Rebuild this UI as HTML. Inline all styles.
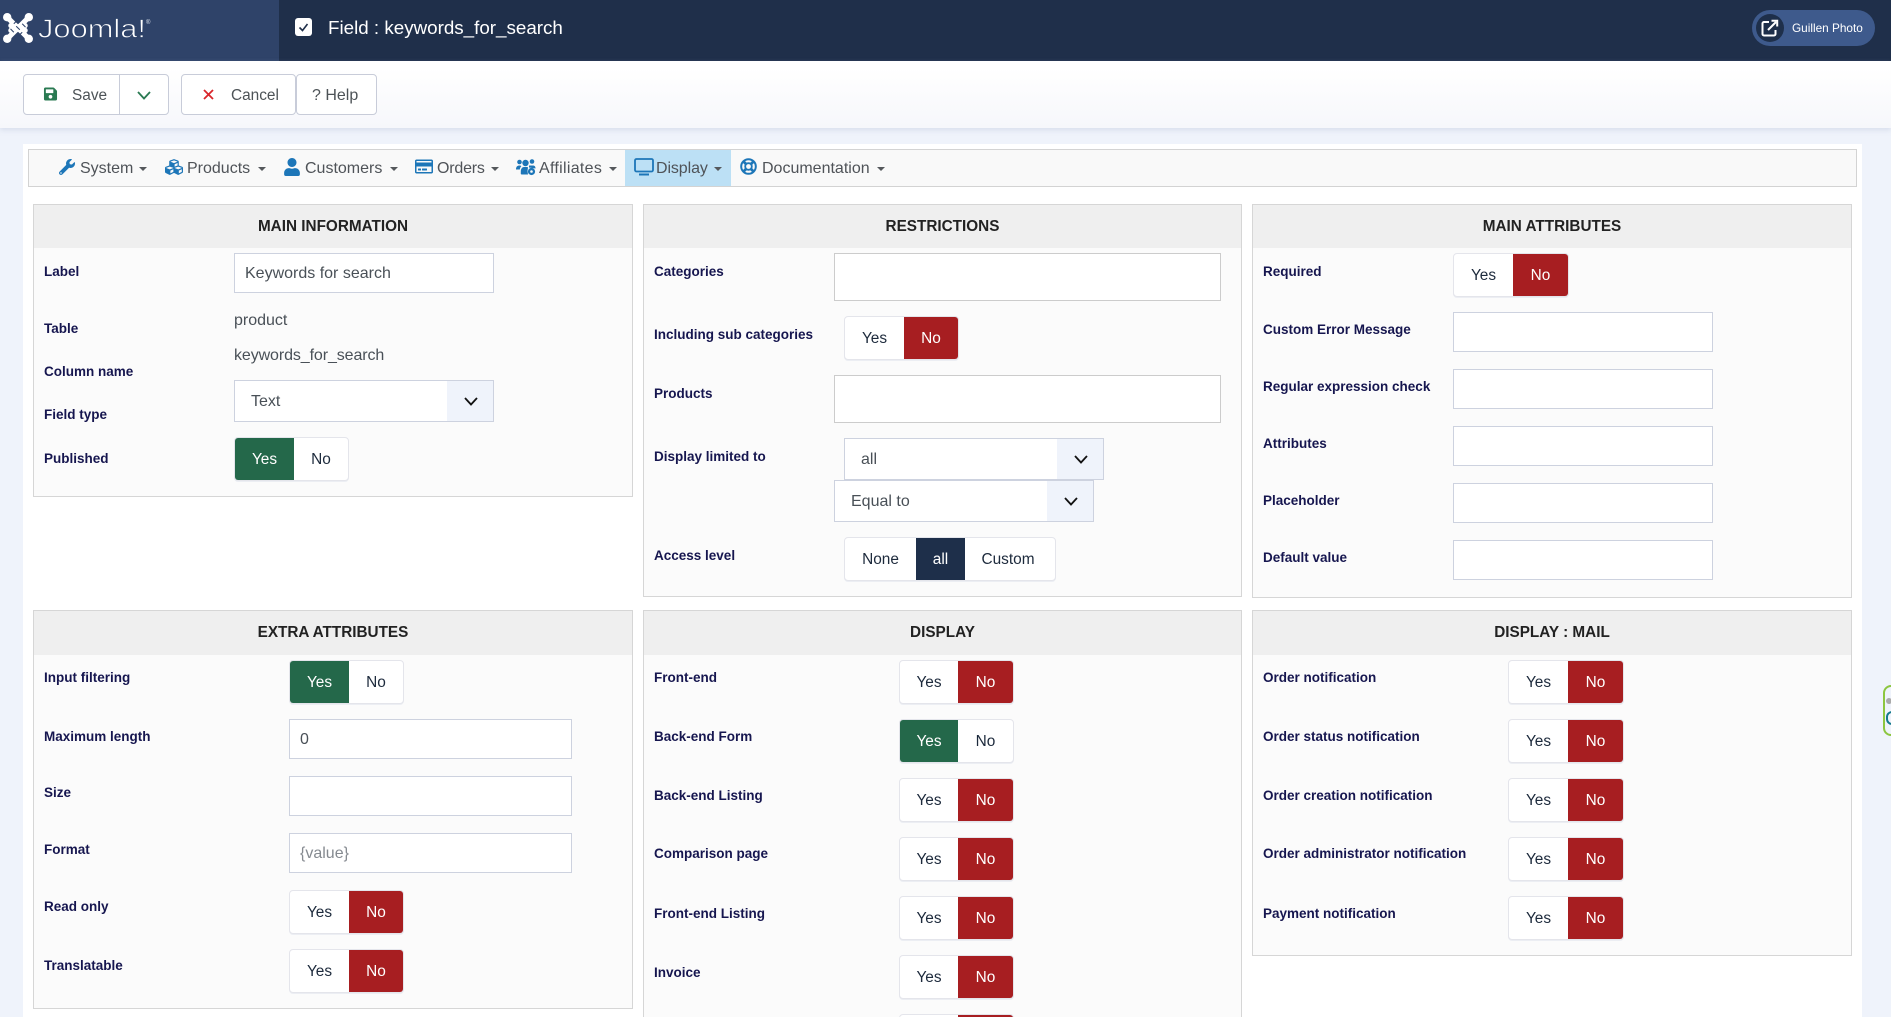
<!DOCTYPE html>
<html lang="en">
<head>
<meta charset="utf-8">
<title>Field : keywords_for_search</title>
<style>
*{box-sizing:border-box}
html,body{margin:0;padding:0;background:#eff3fb;font-family:"Liberation Sans",Arial,sans-serif}
#w{position:relative;width:1891px;height:1017px;overflow:hidden;background:#eff3fb}
.a,.l,.p,.i,.t,.s,.b,.n,.c,svg{position:absolute}
.l{left:0;margin-top:1px;font-size:13.5px;font-weight:700;line-height:20px;color:#16164f;white-space:nowrap}
.p{border:1px solid #d6d6d6;background:#fbfbfb}
.p h3{margin:0;height:43px;background:#efefef;font-size:15.3px;font-weight:700;color:#222;text-align:center;line-height:43px}
.i{background:#fff;border:1px solid #cdd2df;font-size:16px;line-height:40px;padding-left:10px;color:#495057;white-space:nowrap}
.s{background:#fff;border:1px solid #cdd2df;font-size:16px;color:#495057;height:42px;line-height:42px;white-space:nowrap}
.s i{position:absolute;right:0;top:0;bottom:0;width:46px;background:#eff3fb}
.s svg{right:15px;top:16px}
.t{height:44px;display:flex;border:1px solid #e4e5eb;border-radius:4px;background:#fff;font-size:15.4px;color:#1d2a3c;box-shadow:0 1px 0 #eceef3;overflow:hidden}
.t span{display:flex;align-items:center;justify-content:center;height:100%;padding-top:1px}
.g{background:#24684a;color:#fff}
.r{background:#a71e21;color:#fff}
.k{background:#1e2f4a;color:#fff}
.b{top:74px;height:41px;border:1px solid #c8ccd9;border-radius:4px;background:#fff}
.x{position:absolute;top:74px;font-size:15.4px;line-height:43px;color:#4d5357;white-space:nowrap}
.n{top:159px;font-size:16px;line-height:20px;color:#4f5358;white-space:nowrap}
.c{top:167px;width:0;height:0;border-left:4px solid transparent;border-right:4px solid transparent;border-top:4.500px solid #55585c}
</style>
</head>
<body>
<div id="w">
<!-- header -->
<div class="a" style="left:0;top:0;width:1891px;height:61px;background:#1f2f4a"></div>
<div class="a" style="left:0;top:0;width:279px;height:61px;background:#2f4369"></div>
<svg style="left:3px;top:13px" width="30" height="30" viewBox="0 0 100 100" fill="none" stroke-linecap="round" stroke-linejoin="round">
<g stroke="#fff" stroke-width="17"><path d="M16 16L58 58L74 42"/><path d="M84 16L42 58L26 42"/><path d="M16 84L58 42L74 58"/><path d="M84 84L42 42L26 58"/></g>
<g stroke="#2f4369" stroke-width="3.500" stroke-linecap="butt"><path d="M36 36L47 25"/><path d="M64 36L75 47"/><path d="M64 64L53 75"/><path d="M36 64L25 53"/><path d="M44 44L56 56"/></g>
<g fill="#fff" stroke="none"><circle cx="14" cy="14" r="14"/><circle cx="86" cy="14" r="14"/><circle cx="14" cy="86" r="14"/><circle cx="86" cy="86" r="14"/></g>
</svg>
<svg style="left:36px;top:10px" width="120" height="36" viewBox="0 0 120 36">
<text x="2" y="27.500" font-family="Liberation Sans" font-size="25.7" fill="#fff" stroke="#2f4369" stroke-width=".75" textLength="108" lengthAdjust="spacingAndGlyphs">Joomla!</text>
<text x="110" y="14" font-family="Liberation Sans" font-size="6" fill="#dfe5ee">®</text>
</svg>
<svg style="left:295px;top:18px" width="18" height="18" viewBox="0 0 18 18"><rect x="0" y="0" width="17" height="18" rx="3" fill="#fff"/><path d="M4.500 9.500L7.500 12.500L12.500 6" fill="none" stroke="#1f2f4a" stroke-width="1.600"/></svg>
<div class="a" style="left:328px;top:16px;font-size:18.8px;line-height:24px;color:#fff;white-space:nowrap">Field : keywords_for_search</div>
<div class="a" style="left:1752px;top:10px;width:123px;height:36px;border-radius:18px;background:#3e5a8c"></div>
<div class="a" style="left:1756px;top:14px;width:28px;height:28px;border-radius:14px;background:#1e2f4a"></div>
<svg style="left:1761px;top:19px" width="18" height="18" viewBox="0 0 18 18" fill="none" stroke="#fff" stroke-width="2"><path d="M8 3H3a1.500 1.500 0 0 0-1.500 1.500V15A1.500 1.500 0 0 0 3 16.500H13A1.500 1.500 0 0 0 14.500 15V11"/><path d="M7 11L15 3"/><path d="M10.500 1.800H16.200V7.500" stroke-width="2"/></svg>
<div class="a" style="left:1792px;top:18px;font-size:11.8px;line-height:20px;color:#fff;white-space:nowrap">Guillen Photo</div>

<!-- toolbar -->
<div class="a" style="left:0;top:61px;width:1891px;height:67px;background:linear-gradient(#fff 10%,#f6f7fb);box-shadow:0 2px 5px rgba(170,180,210,.35)"></div>
<div class="b" style="left:23px;width:146px"></div>
<div class="a" style="left:119px;top:74px;width:1px;height:41px;background:#c8ccd9"></div>
<svg style="left:43px;top:87px" width="15" height="14" viewBox="0 16 448 480"><path fill="#2a7a52" d="M433.941 129.941l-83.882-83.882A48 48 0 0 0 316.118 32H48C21.490 32 0 53.490 0 80v352c0 26.510 21.490 48 48 48h352c26.510 0 48-21.490 48-48V163.882a48 48 0 0 0-14.059-33.941zM224 416c-35.346 0-64-28.654-64-64 0-35.346 28.654-64 64-64s64 28.654 64 64c0 35.346-28.654 64-64 64zm96-304.520V212c0 6.627-5.373 12-12 12H76c-6.627 0-12-5.373-12-12V108c0-6.627 5.373-12 12-12h228.520c3.183 0 6.235 1.264 8.485 3.515l3.480 3.480A11.996 11.996 0 0 1 320 111.480z"/></svg>
<div class="x" style="left:72px">Save</div>
<svg style="left:137px;top:91px" width="14" height="9" viewBox="0 0 14 9"><path d="M1 1L7 7.500L13 1" fill="none" stroke="#2a7a52" stroke-width="1.800"/></svg>
<div class="b" style="left:181px;width:115px"></div>
<svg style="left:203px;top:89px" width="11" height="11" viewBox="0 0 11 11"><path d="M1 1L10 10M10 1L1 10" stroke="#d9262b" stroke-width="1.800"/></svg>
<div class="x" style="left:231px">Cancel</div>
<div class="b" style="left:296px;width:81px"></div>
<div class="x" style="left:312px;font-size:16px">? Help</div>

<!-- white container -->
<div class="a" style="left:23px;top:144px;width:1839px;height:873px;background:#fff"></div>

<!-- nav -->
<div class="a" style="left:28px;top:149px;width:1829px;height:38px;background:#f9f9f9;border:1px solid #d3d3d3"></div>
<div class="a" style="left:625px;top:150px;width:106px;height:36px;background:#bce0f5"></div>
<svg style="left:59px;top:159px" width="16" height="16" viewBox="0 0 512 512"><path fill="#1d76b8" d="M507.730 109.100c-2.240-9.030-13.540-12.090-20.120-5.510l-74.360 74.360-67.880-11.310-11.310-67.880 74.360-74.360c6.620-6.620 3.430-17.900-5.660-20.160-47.380-11.740-99.550.91-136.580 37.930-39.640 39.640-50.550 97.100-34.050 147.200L18.740 402.760c-24.990 24.990-24.990 65.510 0 90.500 24.990 24.990 65.510 24.990 90.500 0l213.210-213.210c50.120 16.710 107.470 5.680 147.370-34.220 37.070-37.070 49.700-89.320 37.910-136.730zM64 472c-13.250 0-24-10.750-24-24 0-13.260 10.750-24 24-24s24 10.740 24 24c0 13.250-10.750 24-24 24z"/></svg>
<div class="n" style="left:80px">System</div><div class="c" style="left:139px"></div>
<svg style="left:165px;top:158px" width="18" height="18" viewBox="0 0 512 512"><path fill="#1d76b8" d="M488.600 250.200L392 214V105.500c0-15-9.300-28.400-23.400-33.700l-100-37.500c-8.100-3.100-17.100-3.100-25.300 0l-100 37.500c-14.100 5.300-23.400 18.700-23.400 33.700V214l-96.600 36.200C9.300 255.500 0 268.900 0 283.900V394c0 13.600 7.700 26.100 19.900 32.200l100 50c10.100 5.100 22.100 5.100 32.200 0l103.900-52 103.900 52c10.100 5.100 22.100 5.100 32.200 0l100-50c12.200-6.100 19.900-18.600 19.900-32.200V283.900c0-15-9.300-28.400-23.400-33.700zM358 214.800l-85 31.900v-68.200l85-37v73.300zM154 104.100l102-38.200 102 38.200v.6l-102 41.400-102-41.400v-.6zm84 291.100l-85 42.500v-79.100l85-38.800v75.400zm0-112l-102 41.400-102-41.400v-.6l102-38.200 102 38.200v.6zm240 112l-85 42.500v-79.100l85-38.800v75.400zm0-112l-102 41.400-102-41.400v-.6l102-38.200 102 38.200v.6z"/></svg>
<div class="n" style="left:187px">Products</div><div class="c" style="left:258px"></div>
<svg style="left:284px;top:158px" width="16" height="18" viewBox="0 0 448 512"><path fill="#1d76b8" d="M224 256c70.700 0 128-57.300 128-128S294.700 0 224 0 96 57.300 96 128s57.300 128 128 128zm89.600 32h-16.700c-22.200 10.200-46.900 16-72.900 16s-50.600-5.800-72.900-16h-16.700C60.200 288 0 348.200 0 422.400V464c0 26.500 21.500 48 48 48h352c26.500 0 48-21.500 48-48v-41.600c0-74.200-60.200-134.400-134.400-134.400z"/></svg>
<div class="n" style="left:305px">Customers</div><div class="c" style="left:390px"></div>
<svg style="left:415px;top:158px" width="18" height="17" viewBox="0 20 576 472"><path fill="#1d76b8" d="M527.900 32H48.100C21.500 32 0 53.500 0 80v352c0 26.500 21.500 48 48.100 48h479.800c26.600 0 48.100-21.500 48.100-48V80c0-26.500-21.500-48-48.100-48zM54.100 80h467.800c3.300 0 6 2.700 6 6v42H48.100V86c0-3.300 2.700-6 6-6zm467.800 352H54.100c-3.300 0-6-2.700-6-6V256h479.800v170c0 3.300-2.700 6-6 6zM192 332v40c0 6.600-5.400 12-12 12h-72c-6.600 0-12-5.400-12-12v-40c0-6.600 5.400-12 12-12h72c6.600 0 12 5.400 12 12zm192 0v40c0 6.600-5.400 12-12 12H236c-6.600 0-12-5.400-12-12v-40c0-6.600 5.400-12 12-12h136c6.600 0 12 5.400 12 12z"/></svg>
<div class="n" style="left:437px;letter-spacing:-.2px">Orders</div><div class="c" style="left:491px"></div>
<svg style="left:516px;top:158px" width="20" height="18" viewBox="0 0 20 18" fill="#1d76b8"><circle cx="3.500" cy="4" r="2.300"/><circle cx="16" cy="3.500" r="2.300"/><circle cx="9.500" cy="5" r="3.200"/><path d="M0 11.500C0 8.500 1.500 7.500 3.500 7.500C4.500 7.500 5 7.800 5.300 8.200C4.300 9.200 4 10 3.800 11.500Z"/><path d="M4.800 16V13.500C4.800 11 6 9 8 9H11L12 9.300L11.500 13L12 16.500H5.500Z"/><path d="M13 7.500H17C18.500 7.500 19.500 8.500 19.500 10.500L13 9.500Z"/><circle cx="15.500" cy="13.500" r="3.600"/><circle cx="15.500" cy="13.500" r="1.300" fill="#f9f9f9"/></svg>
<div class="n" style="left:539px;letter-spacing:.3px">Affiliates</div><div class="c" style="left:609px"></div>
<svg style="left:634px;top:158px" width="20" height="18" viewBox="0 0 20 18" fill="none"><rect x="1" y="1" width="18" height="12.500" rx="1.500" stroke="#1d76b8" stroke-width="1.800"/><path d="M5 16.500H15" stroke="#1d76b8" stroke-width="2"/></svg>
<div class="n" style="left:656px;letter-spacing:-.1px">Display</div><div class="c" style="left:714px"></div>
<svg style="left:740px;top:158px" width="17" height="17" viewBox="0 0 17 17" fill="none" stroke="#1d76b8"><circle cx="8.500" cy="8.500" r="7.300" stroke-width="2"/><circle cx="8.500" cy="8.500" r="3.300" stroke-width="1.800"/><path d="M3.500 3.500L6 6M13.500 3.500L11 6M3.500 13.500L6 11M13.500 13.500L11 11" stroke-width="2.800"/></svg>
<div class="n" style="left:762px">Documentation</div><div class="c" style="left:877px"></div>

<!-- Panel: MAIN INFORMATION -->
<div class="p" style="left:33px;top:204px;width:600px;height:293px"><h3>MAIN INFORMATION</h3></div>
<div class="l" style="left:44px;top:261px">Label</div>
<div class="l" style="left:44px;top:318px">Table</div>
<div class="l" style="left:44px;top:361px">Column name</div>
<div class="l" style="left:44px;top:404px">Field type</div>
<div class="l" style="left:44px;top:448px">Published</div>
<div class="i" style="left:234px;top:253px;width:260px;height:40px">Keywords for search</div>
<div class="a" style="left:234px;top:311px;font-size:16px;line-height:20px;color:#495057">product</div>
<div class="a" style="left:234px;top:346px;font-size:16px;line-height:20px;color:#495057;letter-spacing:-.1px">keywords_for_search</div>
<div class="s" style="left:234px;top:380px;width:260px;padding-left:16px">Text<i></i><svg width="14" height="9" viewBox="0 0 14 9"><path d="M1 1L7 7.500L13 1" fill="none" stroke="#111" stroke-width="1.800"/></svg></div>
<div class="t" style="left:234px;top:437px;width:115px"><span class="g" style="width:59px">Yes</span><span style="width:54px">No</span></div>

<!-- Panel: RESTRICTIONS -->
<div class="p" style="left:643px;top:204px;width:599px;height:393px"><h3>RESTRICTIONS</h3></div>
<div class="l" style="left:654px;top:261px">Categories</div>
<div class="l" style="left:654px;top:324px">Including sub categories</div>
<div class="l" style="left:654px;top:383px">Products</div>
<div class="l" style="left:654px;top:446px">Display limited to</div>
<div class="l" style="left:654px;top:545px">Access level</div>
<div class="i" style="left:834px;top:253px;width:387px;height:48px;border-color:#ccc"></div>
<div class="t" style="left:844px;top:316px;width:115px"><span style="width:59px">Yes</span><span class="r" style="width:54px">No</span></div>
<div class="i" style="left:834px;top:375px;width:387px;height:48px;border-color:#ccc"></div>
<div class="s" style="left:844px;top:438px;width:260px;padding-left:16px">all<i></i><svg width="14" height="9" viewBox="0 0 14 9"><path d="M1 1L7 7.500L13 1" fill="none" stroke="#111" stroke-width="1.800"/></svg></div>
<div class="s" style="left:834px;top:480px;width:260px;padding-left:16px">Equal to<i></i><svg width="14" height="9" viewBox="0 0 14 9"><path d="M1 1L7 7.500L13 1" fill="none" stroke="#111" stroke-width="1.800"/></svg></div>
<div class="t" style="left:844px;top:537px;width:212px"><span style="width:71px">None</span><span class="k" style="width:49px">all</span><span style="width:86px">Custom</span></div>

<!-- Panel: MAIN ATTRIBUTES -->
<div class="p" style="left:1252px;top:204px;width:600px;height:394px"><h3>MAIN ATTRIBUTES</h3></div>
<div class="l" style="left:1263px;top:261px">Required</div>
<div class="l" style="left:1263px;top:319px">Custom Error Message</div>
<div class="l" style="left:1263px;top:376px">Regular expression check</div>
<div class="l" style="left:1263px;top:433px">Attributes</div>
<div class="l" style="left:1263px;top:490px">Placeholder</div>
<div class="l" style="left:1263px;top:547px">Default value</div>
<div class="t" style="left:1453px;top:253px;width:116px"><span style="width:59px">Yes</span><span class="r" style="width:55px">No</span></div>
<div class="i" style="left:1453px;top:312px;width:260px;height:40px"></div>
<div class="i" style="left:1453px;top:369px;width:260px;height:40px"></div>
<div class="i" style="left:1453px;top:426px;width:260px;height:40px"></div>
<div class="i" style="left:1453px;top:483px;width:260px;height:40px"></div>
<div class="i" style="left:1453px;top:540px;width:260px;height:40px"></div>

<!-- Panel: EXTRA ATTRIBUTES -->
<div class="p" style="left:33px;top:610px;width:600px;height:399px"><h3 style="height:44px;line-height:44px">EXTRA ATTRIBUTES</h3></div>
<div class="l" style="left:44px;top:667px">Input filtering</div>
<div class="l" style="left:44px;top:726px">Maximum length</div>
<div class="l" style="left:44px;top:782px">Size</div>
<div class="l" style="left:44px;top:839px">Format</div>
<div class="l" style="left:44px;top:896px">Read only</div>
<div class="l" style="left:44px;top:955px">Translatable</div>
<div class="t" style="left:289px;top:660px;width:115px"><span class="g" style="width:59px">Yes</span><span style="width:54px">No</span></div>
<div class="i" style="left:289px;top:719px;width:283px;height:40px">0</div>
<div class="i" style="left:289px;top:776px;width:283px;height:40px"></div>
<div class="i" style="left:289px;top:833px;width:283px;height:40px;color:#858a90">{value}</div>
<div class="t" style="left:289px;top:890px;width:115px"><span style="width:59px">Yes</span><span class="r" style="width:54px">No</span></div>
<div class="t" style="left:289px;top:949px;width:115px"><span style="width:59px">Yes</span><span class="r" style="width:54px">No</span></div>

<!-- Panel: DISPLAY -->
<div class="p" style="left:643px;top:610px;width:599px;height:420px"><h3 style="height:44px;line-height:44px">DISPLAY</h3></div>
<div class="l" style="left:654px;top:667px">Front-end</div>
<div class="l" style="left:654px;top:726px">Back-end Form</div>
<div class="l" style="left:654px;top:785px">Back-end Listing</div>
<div class="l" style="left:654px;top:843px">Comparison page</div>
<div class="l" style="left:654px;top:903px">Front-end Listing</div>
<div class="l" style="left:654px;top:962px">Invoice</div>
<div class="t" style="left:899px;top:660px;width:115px"><span style="width:58px">Yes</span><span class="r" style="width:55px">No</span></div>
<div class="t" style="left:899px;top:719px;width:115px"><span class="g" style="width:58px">Yes</span><span style="width:55px">No</span></div>
<div class="t" style="left:899px;top:778px;width:115px"><span style="width:58px">Yes</span><span class="r" style="width:55px">No</span></div>
<div class="t" style="left:899px;top:837px;width:115px"><span style="width:58px">Yes</span><span class="r" style="width:55px">No</span></div>
<div class="t" style="left:899px;top:896px;width:115px"><span style="width:58px">Yes</span><span class="r" style="width:55px">No</span></div>
<div class="t" style="left:899px;top:955px;width:115px"><span style="width:58px">Yes</span><span class="r" style="width:55px">No</span></div>
<div class="t" style="left:899px;top:1014px;width:115px"><span style="width:58px"></span><span class="r" style="width:55px"></span></div>

<!-- Panel: DISPLAY : MAIL -->
<div class="p" style="left:1252px;top:610px;width:600px;height:346px"><h3 style="height:44px;line-height:44px">DISPLAY : MAIL</h3></div>
<div class="l" style="left:1263px;top:667px">Order notification</div>
<div class="l" style="left:1263px;top:726px">Order status notification</div>
<div class="l" style="left:1263px;top:785px">Order creation notification</div>
<div class="l" style="left:1263px;top:843px">Order administrator notification</div>
<div class="l" style="left:1263px;top:903px">Payment notification</div>
<div class="t" style="left:1508px;top:660px;width:116px"><span style="width:59px">Yes</span><span class="r" style="width:55px">No</span></div>
<div class="t" style="left:1508px;top:719px;width:116px"><span style="width:59px">Yes</span><span class="r" style="width:55px">No</span></div>
<div class="t" style="left:1508px;top:778px;width:116px"><span style="width:59px">Yes</span><span class="r" style="width:55px">No</span></div>
<div class="t" style="left:1508px;top:837px;width:116px"><span style="width:59px">Yes</span><span class="r" style="width:55px">No</span></div>
<div class="t" style="left:1508px;top:896px;width:116px"><span style="width:59px">Yes</span><span class="r" style="width:55px">No</span></div>

<!-- side tag -->
<div class="a" style="left:1883px;top:685px;width:16px;height:51px;border:2px solid #8cc63f;border-radius:8px;background:#eff3fb;overflow:hidden">
<div class="a" style="left:1px;top:11px;width:6px;height:6px;border-radius:3px;background:#aaa"></div>
<div class="a" style="left:1px;top:24px;width:12px;height:14px;border:2px solid #157a8c;border-radius:6px"></div>
</div>
</div>
</body>
</html>
